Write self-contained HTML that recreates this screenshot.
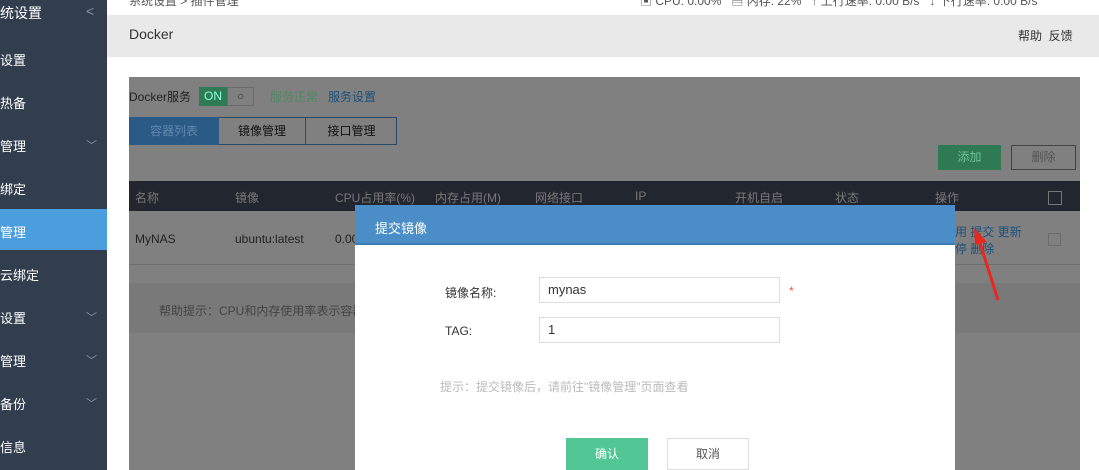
<!DOCTYPE html><html><head><meta charset="utf-8"><style>
*{margin:0;padding:0;box-sizing:border-box}
body{width:1099px;height:470px;overflow:hidden;background:#fff;font-family:"Liberation Sans","Noto Sans CJK SC",sans-serif;font-size:12px;color:#333;position:relative}
.a{position:absolute;white-space:nowrap}
.side{left:0;top:0;width:107px;height:470px;background:#323d4e}
.si{color:#fff;font-size:13px;left:0}
.chev{color:#8a95a5;left:86px;font-size:11px}
</style></head><body>
<div class="a side"></div>
<div class="a si" style="top:3px;font-size:14px">统设置</div><div class="a chev" style="top:3px;font-size:14px">&lt;</div>
<div class="a si" style="top:50px">设置</div>
<div class="a si" style="top:93px">热备</div>
<div class="a si" style="top:136px">管理</div><div class="a chev" style="top:137px">﹀</div>
<div class="a si" style="top:179px">绑定</div>
<div class="a" style="left:0;top:209px;width:107px;height:41px;background:#4b9ede"></div>
<div class="a si" style="top:222px">管理</div>
<div class="a si" style="top:265px">云绑定</div>
<div class="a si" style="top:308px">设置</div><div class="a chev" style="top:309px">﹀</div>
<div class="a si" style="top:351px">管理</div><div class="a chev" style="top:352px">﹀</div>
<div class="a si" style="top:394px">备份</div><div class="a chev" style="top:395px">﹀</div>
<div class="a si" style="top:437px">信息</div>
<div class="a" style="left:129px;top:-8px;color:#555">系统设置 &gt; 插件管理</div>
<div class="a" style="left:640px;top:-8px;color:#555">▣ CPU: 0.00% &nbsp; ▤ 内存: 22% &nbsp; ↑ 上行速率: 0.00 B/s &nbsp; ↓ 下行速率: 0.00 B/s</div>
<div class="a" style="left:107px;top:15px;width:992px;height:42px;background:#e9e9e9"></div>
<div class="a" style="left:129px;top:26px;font-size:14px;color:#333">Docker</div>
<div class="a" style="left:1018px;top:27px">帮助 &nbsp;反馈</div>
<div class="a" style="left:129px;top:77px;width:951px;height:393px;background:#808080"></div>
<div class="a" style="left:129px;top:88px;color:#222">Docker服务</div>
<div class="a" style="left:199px;top:87px;width:28px;height:19px;background:#2e7b55;color:#8fd;text-align:center;line-height:19px">ON</div>
<div class="a" style="left:227px;top:87px;width:27px;height:19px;border:1px solid #6a6a6a;text-align:center;line-height:17px;color:#333">○</div>
<div class="a" style="left:270px;top:88px;color:#4d8a5f">服务正常</div>
<div class="a" style="left:328px;top:88px;color:#1e4f7a">服务设置</div>
<div class="a" style="left:129px;top:117px;width:268px;height:28px;border:1px solid #2a4a66"></div>
<div class="a" style="left:129px;top:117px;width:90px;height:28px;background:#2a5a85;color:#5f8ab0;text-align:center;line-height:28px">容器列表</div>
<div class="a" style="left:219px;top:117px;width:86px;height:28px;color:#111;text-align:center;line-height:28px">镜像管理</div>
<div class="a" style="left:305px;top:117px;width:1px;height:28px;background:#2a4a66"></div>
<div class="a" style="left:306px;top:117px;width:91px;height:28px;color:#111;text-align:center;line-height:28px">接口管理</div>
<div class="a" style="left:938px;top:145px;width:63px;height:25px;background:#2d7a55;color:#6fbf96;text-align:center;line-height:25px">添加</div>
<div class="a" style="left:1011px;top:145px;width:65px;height:25px;border:1px solid #444;color:#555;text-align:center;line-height:23px">删除</div>
<div class="a" style="left:129px;top:181px;width:951px;height:30px;background:#22272f"></div>
<div class="a" style="left:135px;top:189px;color:#777">名称</div><div class="a" style="left:235px;top:189px;color:#777">镜像</div><div class="a" style="left:335px;top:189px;color:#777">CPU占用率(%)</div><div class="a" style="left:435px;top:189px;color:#777">内存占用(M)</div><div class="a" style="left:535px;top:189px;color:#777">网络接口</div><div class="a" style="left:635px;top:189px;color:#777">IP</div><div class="a" style="left:735px;top:189px;color:#777">开机自启</div><div class="a" style="left:835px;top:189px;color:#777">状态</div><div class="a" style="left:935px;top:189px;color:#777">操作</div>
<div class="a" style="left:1048px;top:191px;width:14px;height:14px;border:1px solid #777"></div>
<div class="a" style="left:129px;top:264px;width:951px;height:1px;background:#6e6e6e"></div>
<div class="a" style="left:135px;top:232px;color:#222">MyNAS</div><div class="a" style="left:235px;top:232px;color:#222">ubuntu:latest</div><div class="a" style="left:335px;top:232px;color:#222">0.00</div>
<div class="a" style="left:955px;top:223px;color:#1e4f7a">用 提交 更新<br>停 删除</div>
<div class="a" style="left:1048px;top:233px;width:13px;height:13px;border:1px solid #6c6c6c"></div>
<div class="a" style="left:129px;top:283px;width:951px;height:50px;background:#797979"></div>
<div class="a" style="left:159px;top:302px;color:#444">帮助提示：CPU和内存使用率表示容器</div>
<div class="a" style="left:355px;top:205px;width:600px;height:265px;background:#fff"></div>
<div class="a" style="left:355px;top:205px;width:600px;height:40px;background:#4b8ec7;border-bottom:2px solid #3d7db5"></div>
<div class="a" style="left:375px;top:218px;color:#fff;font-size:13px">提交镜像</div>
<div class="a" style="left:445px;top:284px;color:#333">镜像名称:</div>
<div class="a" style="left:539px;top:277px;width:241px;height:26px;border:1px solid #ddd;padding-left:8px;line-height:24px;font-size:13px">mynas</div>
<div class="a" style="left:789px;top:284px;color:#e55">*</div>
<div class="a" style="left:445px;top:324px;color:#333">TAG:</div>
<div class="a" style="left:539px;top:317px;width:241px;height:26px;border:1px solid #ddd;padding-left:8px;line-height:24px;font-size:13px">1</div>
<div class="a" style="left:440px;top:378px;color:#bbb">提示：提交镜像后，请前往"镜像管理"页面查看</div>
<div class="a" style="left:566px;top:438px;width:82px;height:32px;background:#52c795;color:#fff;text-align:center;line-height:32px">确认</div>
<div class="a" style="left:667px;top:438px;width:82px;height:32px;border:1px solid #ddd;color:#555;text-align:center;line-height:30px">取消</div>
<svg class="a" style="left:965px;top:220px" width="45" height="90"><line x1="33" y1="80" x2="14" y2="20" stroke="#e8281e" stroke-width="3"/><polygon points="9,8 22,22 10,25" fill="#e8281e"/></svg>
</body></html>
